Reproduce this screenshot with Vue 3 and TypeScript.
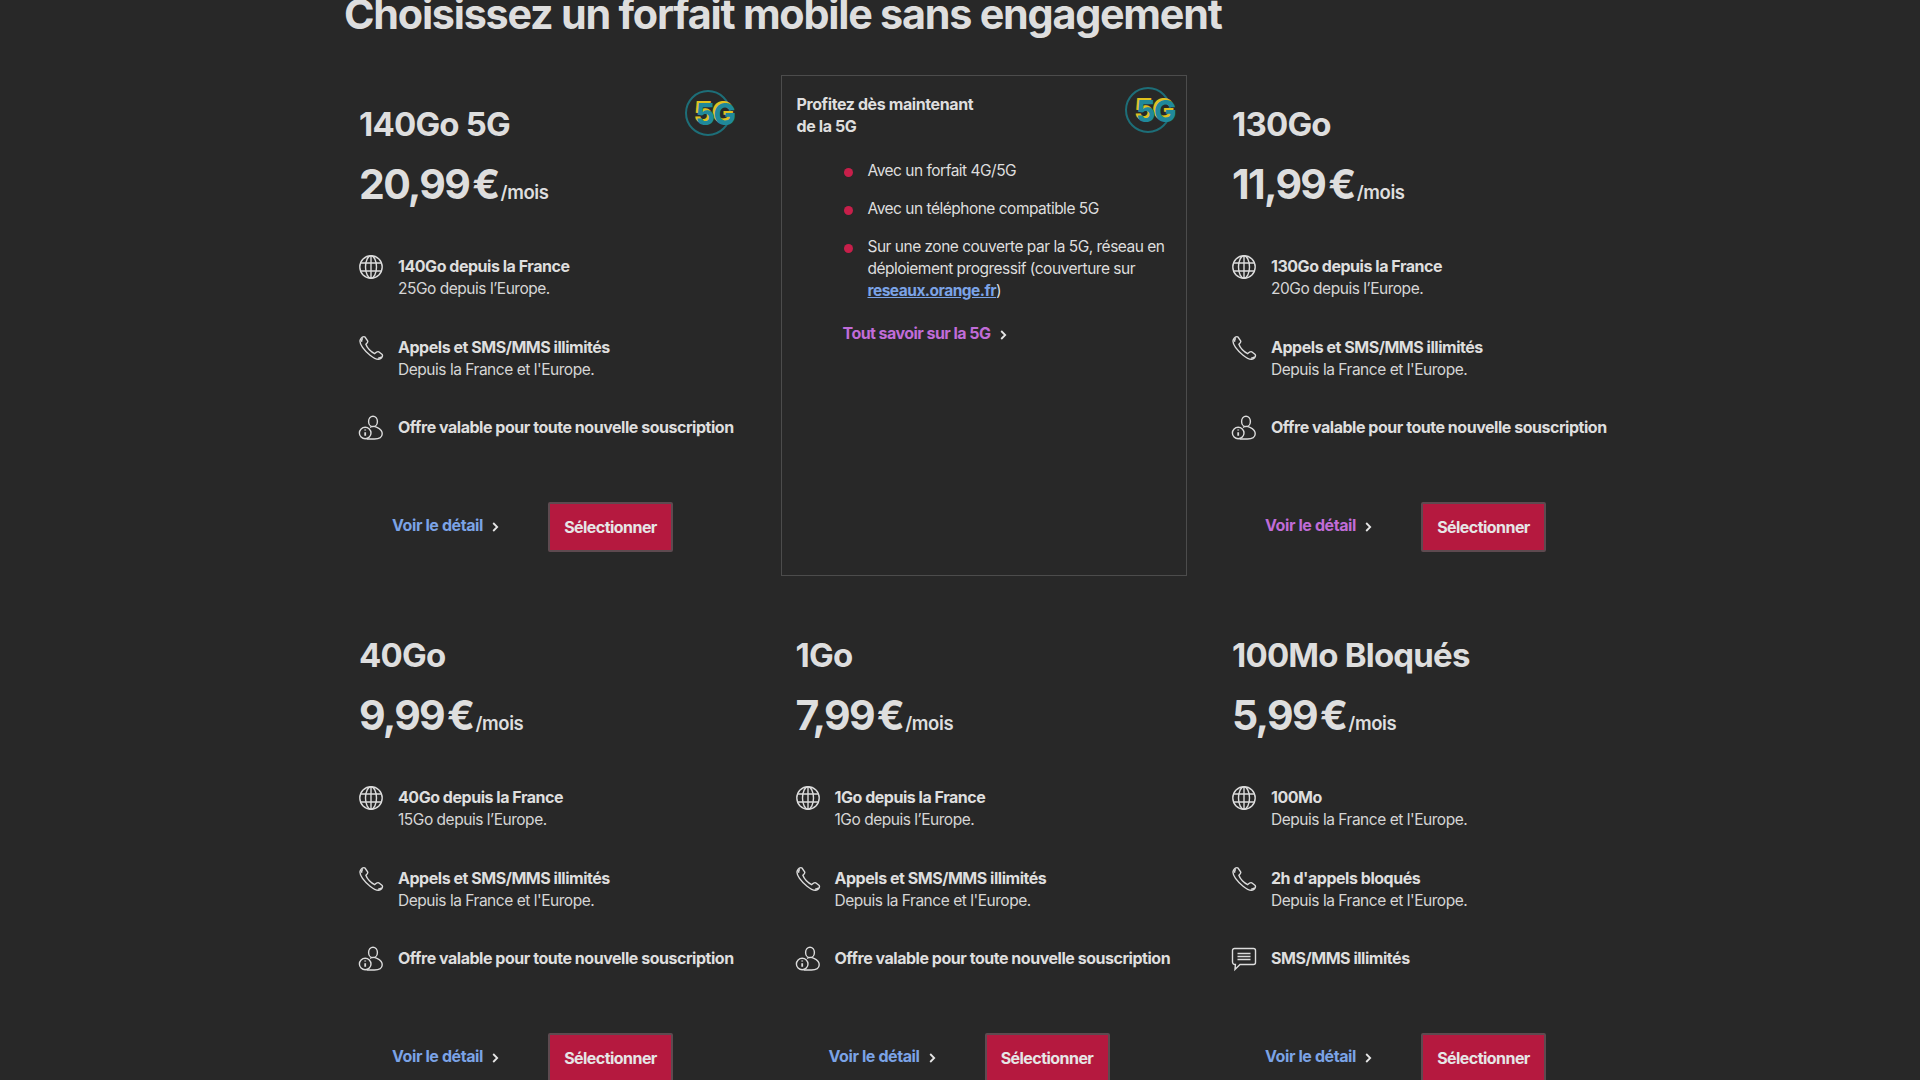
<script setup lang="ts">
interface Feature { icon: 'globe' | 'phone' | 'user' | 'chat'; strong: string; sub?: string }
interface Plan { kind: 'plan'; name: string; price: string; badge?: boolean; purple?: boolean; features: Feature[] }
interface Promo { kind: 'promo' }
const offer: Feature = { icon: 'user', strong: 'Offre valable pour toute nouvelle souscription' }
const calls: Feature = { icon: 'phone', strong: 'Appels et SMS/MMS illimités', sub: "Depuis la France et l'Europe." }
const data = (a: string, b: string): Feature => ({ icon: 'globe', strong: a, sub: b })
const cells: (Plan | Promo)[] = [
  { kind: 'plan', name: '140Go 5G', price: '20,99 €', badge: true, features: [data('140Go depuis la France', '25Go depuis l’Europe.'), calls, offer] },
  { kind: 'promo' },
  { kind: 'plan', name: '130Go', price: '11,99 €', purple: true, features: [data('130Go depuis la France', '20Go depuis l’Europe.'), calls, offer] },
  { kind: 'plan', name: '40Go', price: '9,99 €', features: [data('40Go depuis la France', '15Go depuis l’Europe.'), calls, offer] },
  { kind: 'plan', name: '1Go', price: '7,99 €', features: [data('1Go depuis la France', '1Go depuis l’Europe.'), calls, offer] },
  { kind: 'plan', name: '100Mo Bloqués', price: '5,99 €', features: [data('100Mo', "Depuis la France et l'Europe."), { icon: 'phone', strong: "2h d'appels bloqués", sub: "Depuis la France et l'Europe." }, { icon: 'chat', strong: 'SMS/MMS illimités' }] },
]
</script>

<template>
  <div class="page">
    <h1 class="heading">Choisissez un forfait mobile sans engagement</h1>
    <div class="grid">
      <template v-for="(c, i) in cells" :key="i">
        <section v-if="c.kind === 'promo'" class="cell promo">
          <div class="badge promo-badge"><span>5G</span></div>
          <h3 class="promo-title">Profitez dès maintenant<br />de la 5G</h3>
          <ul class="bullets">
            <li><i class="dot"></i><span>Avec un forfait 4G/5G</span></li>
            <li><i class="dot"></i><span>Avec un téléphone compatible 5G</span></li>
            <li><i class="dot"></i><span>Sur une zone couverte par la 5G, réseau en déploiement progressif (couverture sur <a class="inline-link">reseaux.orange.fr</a>)</span></li>
          </ul>
          <a class="link purple promo-link">Tout savoir sur la 5G
            <svg class="chev" viewBox="0 0 7 10"><path d="M1.2 1l4 4-4 4" /></svg>
          </a>
        </section>
        <section v-else class="cell">
          <div v-if="c.badge" class="badge"><span>5G</span></div>
          <h2 class="name">{{ c.name }}</h2>
          <p class="price">{{ c.price }}<small>/mois</small></p>
          <ul class="features">
            <li v-for="f in c.features" :key="f.strong" class="feature">
              <svg class="ico" viewBox="0 0 26 26">
                <template v-if="f.icon === 'globe'">
                  <circle cx="13" cy="13" r="11.2" />
                  <ellipse cx="13" cy="13" rx="5.5" ry="11.2" />
                  <path d="M13 1.8v22.4M2.6 9h20.8M2.6 17h20.8" />
                </template>
                <template v-else-if="f.icon === 'phone'">
                  <path d="M2.2 5C3 2.6 5.6.8 7 2l2.6 3.8c.7 1.1-.3 2.2-1.7 3.4 1.2 3.8 5.2 8 8.8 9.4 1.6-1.6 2.9-2.5 4-1.8l3.2 2.4c1.3 1.2.2 3.4-1.4 4.4-2.2 1.6-6.2 0-10.4-3.4C6.4 15.8.9 9 2.2 5z" />
                  <path d="M4.6 3.2c-1 1.2-1.2 2.4-.8 3.6M20.2 23c1.4.2 2.6-.2 3.4-1.2" />
                </template>
                <template v-else-if="f.icon === 'user'">
                  <ellipse cx="15" cy="6.4" rx="4.4" ry="5.2" />
                  <path d="M12 12.4c1.8-1.2 4.6-1.2 7 0 3.4 1.6 5.4 4 5.2 6.6-.2 3.4-3.4 5-7.8 5H8.6" />
                  <circle cx="7.2" cy="18" r="5.8" />
                  <path d="M7.2 17.2v3.6M7.2 14.6v1" stroke-width="1.8" />
                </template>
                <template v-else>
                  <path d="M4 2.5h18.5a2 2 0 0 1 2 2v12a2 2 0 0 1-2 2H9l-5 5 .4-5A2.5 2.5 0 0 1 1.5 16V4.5a2 2 0 0 1 2.5-2z" />
                  <path d="M6.5 7.5h13M6.5 10.5h13M6.5 13.5h13" />
                </template>
              </svg>
              <div>
                <strong class="strong">{{ f.strong }}</strong>
                <span v-if="f.sub" class="sub">{{ f.sub }}</span>
              </div>
            </li>
          </ul>
          <div class="cta">
            <a class="link detail" :class="{ purple: c.purple }">Voir le détail
              <svg class="chev" viewBox="0 0 7 10"><path d="M1.2 1l4 4-4 4" /></svg>
            </a>
            <button class="btn" type="button">Sélectionner</button>
          </div>
        </section>
      </template>
    </div>
  </div>
</template>

<style>
html, body { background: #282828; }
</style>

<style scoped>
.page {
  height: 1080px;
  overflow: hidden;
  box-sizing: border-box;
  padding-left: 344px;
  background: #282828;
  color: #dedede;
  font-family: Inter, "Liberation Sans", sans-serif;
}
.heading {
  margin: -11px 0 36px;
  height: 50px;
  font-size: 41.3px;
  line-height: 50px;
  font-weight: 650;
  letter-spacing: -1.23px;
  white-space: nowrap;
}
.grid {
  display: grid;
  grid-template-columns: repeat(3, 406.5px);
  grid-auto-rows: 501px;
  column-gap: 30px;
  row-gap: 30px;
}
.cell {
  position: relative;
  box-sizing: border-box;
  display: flex;
  flex-direction: column;
  padding: 29px 15px 24px;
}
.promo {
  border: 1px solid #4c4c4c;
  padding: 17px 15px 0;
}
.badge {
  position: absolute;
  top: 15px;
  right: 20px;
  width: 46px;
  height: 46px;
  box-sizing: border-box;
  border: 2px solid #1d6e78;
  border-radius: 50%;
}
.badge span {
  position: absolute;
  left: 9px;
  top: 7px;
  font-size: 30px;
  line-height: 30px;
  font-weight: 800;
  letter-spacing: -1.5px;
  color: #20899a;
  text-shadow: -2px -2px 0 #e0c11e;
}
.promo-badge { top: 11px; right: 15px; }
.name {
  margin: 0;
  font-size: 33px;
  line-height: 40px;
  font-weight: 650;
  letter-spacing: -.8px;
}
.price {
  margin: 15px 0 38px;
  font-size: 41px;
  line-height: 50px;
  font-weight: 650;
  letter-spacing: -1.7px;
  word-spacing: -5px;
}
.price small {
  margin-left: 2px;
  font-size: 18.5px;
  font-weight: 600;
  letter-spacing: -.4px;
}
.features { list-style: none; margin: 0; padding: 0; }
.feature {
  display: flex;
  gap: 14px;
  min-height: 45px;
  margin-bottom: 35.5px;
  font-size: 16px;
  line-height: 22px;
}
.ico {
  width: 26px;
  height: 26px;
  flex: none;
  margin: -1px 0 0 -1px;
  fill: none;
  stroke: #dcdcdc;
  stroke-width: 1.4;
}
.strong { display: block; font-weight: 650; letter-spacing: -.47px; white-space: nowrap; }
.sub { display: block; margin-top: 1px; font-size: 15.5px; letter-spacing: -.47px; color: #d6d6d6; white-space: nowrap; }
.cta {
  margin-top: auto;
  display: flex;
  align-items: center;
  padding-left: 33px;
}
.link {
  font-size: 16px;
  font-weight: 650;
  letter-spacing: -.4px;
  color: #7ba3e6;
  white-space: nowrap;
}
.purple { color: #c06cd8; }
.detail { width: 156px; margin-top: -5px; }
.chev {
  width: 7px;
  height: 10px;
  margin-left: 6px;
  fill: none;
  stroke: #e6e6e6;
  stroke-width: 1.8;
  transform: translateY(1px);
}
.btn {
  width: 125px;
  height: 50px;
  padding: 0;
  border: 2px solid #5e4a50;
  border-radius: 2px;
  background: #b5193f;
  color: #e6e6e6;
  font: 650 16px/22px Inter, "Liberation Sans", sans-serif;
  letter-spacing: -.55px;
}
.promo-title {
  margin: 0;
  font-size: 16px;
  line-height: 22px;
  font-weight: 650;
  letter-spacing: -.4px;
}
.bullets {
  list-style: none;
  margin: 23px 0 0;
  padding: 0 0 0 47px;
  font-size: 15.5px;
  line-height: 22px;
  letter-spacing: -.5px;
}
.bullets li { display: flex; margin-bottom: 16px; }
.dot {
  flex: none;
  width: 9px;
  height: 9px;
  margin: 8px 15px 0 0;
  border-radius: 50%;
  background: #c71f4a;
}
.inline-link { color: #7ba3e6; text-decoration: underline; font-weight: 650; }
.promo-link { display: block; margin: 4px 0 0 46px; line-height: 22px; letter-spacing: -.55px; }
</style>
